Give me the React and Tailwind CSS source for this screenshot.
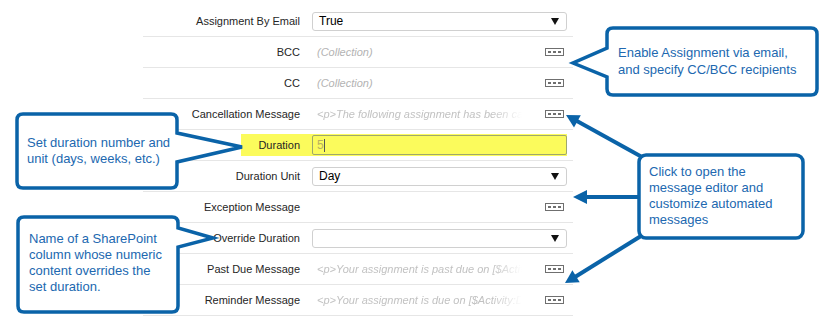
import React from "react";

const Dots = () => (
  <div className="flex h-[8px] w-[19px] items-center justify-center gap-[2px] border border-[#6f6f6f]">
    <span className="h-[2px] w-[3px] bg-[#6f6f6f]" />
    <span className="h-[2px] w-[3px] bg-[#6f6f6f]" />
    <span className="h-[2px] w-[3px] bg-[#6f6f6f]" />
  </div>
);

const Tri = () => (
  <svg width="8" height="7" viewBox="0 0 8 7">
    <polygon points="0,0 8,0 4,7" fill="#111" />
  </svg>
);

const Select = ({ value }) => (
  <div className="flex h-[19px] w-full items-center justify-between rounded-[3px] border border-[#d0d0d0] pl-[6px] pr-[7px] text-[12px] text-black">
    <span>{value}</span>
    <Tri />
  </div>
);

const Msg = ({ text }) => (
  <div className="flex w-full items-center justify-between pl-[5px] pr-[3px]">
    <span className="w-[205px] overflow-hidden whitespace-nowrap text-[11px] italic text-[#c2c2c2] [mask-image:linear-gradient(to_right,black_85%,transparent)]">
      {text}
    </span>
    <Dots />
  </div>
);

const Row = ({ label, children }) => (
  <div className="flex h-[31px] items-center border-b border-[#e6e6e6]">
    <div className="w-[157px] text-right text-[11px] text-[#262626]">{label}</div>
    <div className="ml-[12px] flex w-[255px] items-center">{children}</div>
  </div>
);

export default function App() {
  return (
    <div className="relative h-[317px] w-[832px] overflow-hidden bg-white font-['Liberation_Sans',Arial,sans-serif]">
      <div className="ml-[143px] w-[430px] pt-[6px]">
        <Row label="Assignment By Email">
          <Select value="True" />
        </Row>
        <Row label="BCC">
          <div className="flex w-full items-center justify-between pl-[5px] pr-[3px]">
            <span className="text-[11px] italic text-[#b3b3b3]">(Collection)</span>
            <Dots />
          </div>
        </Row>
        <Row label="CC">
          <div className="flex w-full items-center justify-between pl-[5px] pr-[3px]">
            <span className="text-[11px] italic text-[#b3b3b3]">(Collection)</span>
            <Dots />
          </div>
        </Row>
        <Row label="Cancellation Message">
          <Msg text="<p>The following assignment has been cancelled</p>" />
        </Row>
        <div className="flex h-[31px] items-center border-b border-[#e6e6e6]">
          <div className="ml-[98px] flex h-[22px] items-center bg-[#fbfb5c]">
            <div className="w-[59px] text-right text-[11px] text-[#262626]">Duration</div>
            <div className="ml-[12px] flex h-[20px] w-[255px] items-center rounded-[2px] border border-[#9fa86c] bg-[#fbfb5c] pl-[4px] text-[12px] text-[#b8b060]">
              <span>5</span>
              <span className="h-[13px] w-px bg-[#555]" />
            </div>
          </div>
        </div>
        <Row label="Duration Unit">
          <Select value="Day" />
        </Row>
        <Row label="Exception Message">
          <div className="flex w-full items-center justify-end pr-[3px]">
            <Dots />
          </div>
        </Row>
        <Row label="Override Duration">
          <Select value="" />
        </Row>
        <Row label="Past Due Message">
          <Msg text="<p>Your assignment is past due on [$Activity:DueDate]</p>" />
        </Row>
        <Row label="Reminder Message">
          <Msg text="<p>Your assignment is due on [$Activity:DueDate]</p>" />
        </Row>
      </div>

      <svg className="pointer-events-none absolute left-0 top-0" width="832" height="317" viewBox="0 0 832 317">
        <g stroke="#0a63a8" strokeWidth="4" strokeLinecap="butt">
          <line x1="642" y1="157" x2="576" y2="120.5" />
          <line x1="640" y1="197" x2="584" y2="197" />
          <line x1="641" y1="236" x2="575" y2="277" />
        </g>
        <g fill="#0a63a8">
          <polygon points="566,115 580.8,115.2 574,127.4" />
          <polygon points="573,197 587,190 587,204" />
          <polygon points="565,283 579.7,282.2 572.4,270.2" />
        </g>
        <g fill="#fff" stroke="#0a63a8" strokeWidth="3.5" strokeLinejoin="miter">
          <path d="M613,28 H811 Q817,28 817,34 V89 Q817,95 811,95 H613 Q607,95 607,89 V77 L573,63 L607,48 V34 Q607,28 613,28 Z" />
          <path d="M23,114 H171 Q177,114 177,120 V133 L242,147 L177,162 V182 Q177,188 171,188 H23 Q17,188 17,182 V120 Q17,114 23,114 Z" />
          <path d="M24,217 H172 Q178,217 178,223 V228 L213,238 L178,247 V306 Q178,312 172,312 H24 Q18,312 18,306 V223 Q18,217 24,217 Z" />
          <rect x="639" y="155" width="164" height="83" rx="7" />
        </g>
      </svg>

      <div className="absolute left-[618px] top-[44px] text-[13px] leading-[17px] text-[#2168b0]">
        Enable Assignment via email,
        <br />
        and specify CC/BCC recipients
      </div>
      <div className="absolute left-[27px] top-[135px] text-[13px] leading-[16px] text-[#2168b0]">
        Set duration number and
        <br />
        unit (days, weeks, etc.)
      </div>
      <div className="absolute left-[29px] top-[231px] text-[13px] leading-[16px] text-[#2168b0]">
        Name of a SharePoint
        <br />
        column whose numeric
        <br />
        content overrides the
        <br />
        set duration.
      </div>
      <div className="absolute left-[649px] top-[164px] text-[13px] leading-[16px] text-[#2168b0]">
        Click to open the
        <br />
        message editor and
        <br />
        customize automated
        <br />
        messages
      </div>
    </div>
  );
}
